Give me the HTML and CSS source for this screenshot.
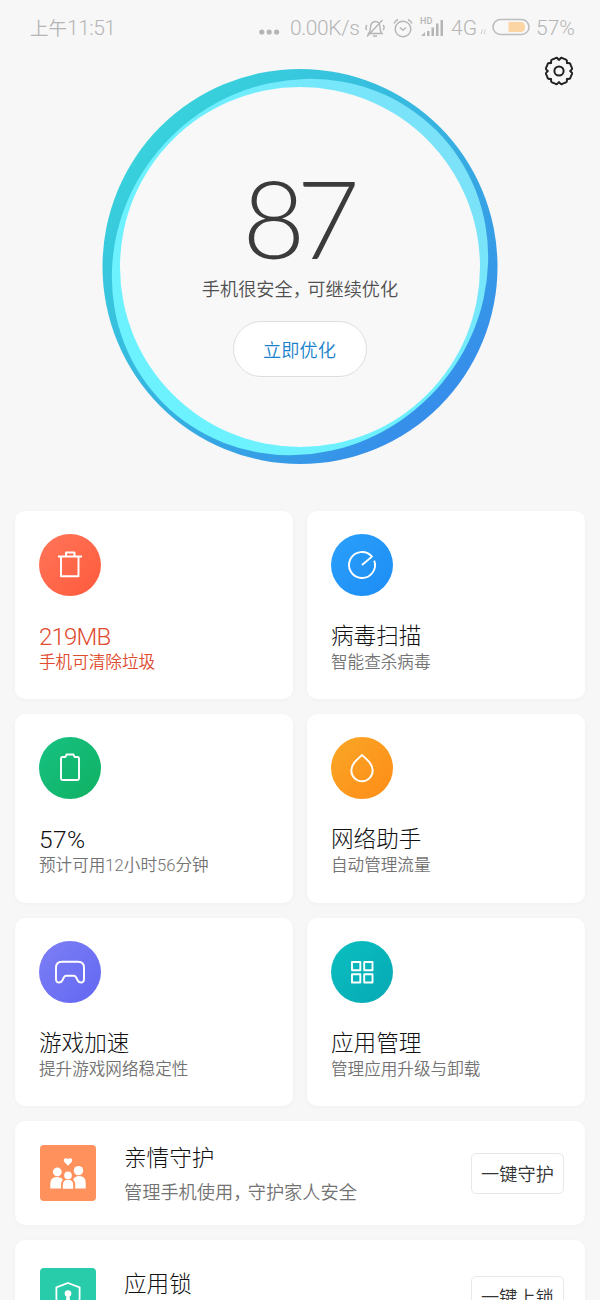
FILE: index.html
```html
<!DOCTYPE html>
<html lang="zh-CN">
<head>
<meta charset="utf-8">
<meta name="viewport" content="width=device-width">
<title>手机管家</title>
<link rel="stylesheet" href="styles.css">
</head>
<body>
<div class="screen">
  <header class="status">
    <span class="clock"><span class="cjk">上午</span>11:51</span>
    <div class="status-right">
      <svg class="dots" width="21" height="6" viewBox="0 0 21 6"><circle cx="2.8" cy="3" r="2.6"/><circle cx="10.2" cy="3" r="2.6"/><circle cx="17.6" cy="3" r="2.6"/></svg>
      <span class="speed">0.00K/s</span>
      <svg class="bell line" width="20" height="20" viewBox="0 0 20 20"><path d="M3.5 15.5c2-2 2-3 2-6C5.500 5.500 7 4 10 3.500s5 2 5 6 .5 4 2 6zM8 18h4M2 18.500L17.500 2M2 7c-1.200 1.200-1.200 3.500-.2 5M18 7c1.200 1.200 1.200 3.500.2 5"/></svg>
      <svg class="alarm line" width="20" height="20" viewBox="0 0 20 20"><circle cx="10" cy="11" r="7.800"/><path d="M1 5.500Q2 3 5 1.500M19 5.500Q18 3 15 1.500M6.800 9.500L10 12l3.200-2.500"/></svg>
      <div class="cell">
        <span class="hd">HD</span>
        <svg width="24" height="18" viewBox="0 0 24 18"><path d="M1 17l4-4v4zM7 12h2.500v5H7zM11.500 8.500H14V17h-2.500zM16 4.500h2.500V17H16zM20.500 1H23v16h-2.500z"/></svg>
      </div>
      <span class="net">4G</span>
      <svg class="arrows" width="7" height="7" viewBox="0 0 7 7"><path d="M1 6L2.500 1.500M4 6l1.500-4.500"/></svg>
      <svg class="battery" width="38" height="18" viewBox="0 0 38 18"><rect x="1" y="1.500" width="36" height="15" rx="7.500" fill="#f8f8f8" stroke="#bdbdbd" stroke-width="1.600"/><path d="M16.500 4h12q4.500 0 4.500 5t-4.500 5h-12z" fill="#fbd5a3"/></svg>
      <span class="pct">57%</span>
    </div>
  </header>

  <section class="hero">
    <svg class="gear" width="30" height="30" viewBox="-15 -15 30 30">
      <defs><path id="tooth" d="M-4.360-10.530Q-3.900-10.900-3.600-12Q-3.300-13.200-2-13.200Q0-12.800 2-13.200Q3.300-13.200 3.600-12Q3.900-10.900 4.360-10.530"/></defs>
      <use href="#tooth" transform="rotate(22.5)"/><use href="#tooth" transform="rotate(67.5)"/><use href="#tooth" transform="rotate(112.5)"/><use href="#tooth" transform="rotate(157.5)"/><use href="#tooth" transform="rotate(202.5)"/><use href="#tooth" transform="rotate(247.5)"/><use href="#tooth" transform="rotate(292.5)"/><use href="#tooth" transform="rotate(337.5)"/>
      <circle r="4.600"/>
    </svg>
    <svg class="ring" width="396" height="396" viewBox="-198 -198 396 396">
      <defs>
        <linearGradient id="deep" x1="0.15" y1="0.15" x2="0.85" y2="0.85"><stop offset="0" stop-color="#38d1dc"/><stop offset=".5" stop-color="#36b2e0"/><stop offset="1" stop-color="#368eea"/></linearGradient>
        <linearGradient id="pale" gradientUnits="userSpaceOnUse" x1="-180" y1="0" x2="190" y2="60"><stop offset="0" stop-color="#6cf2fe"/><stop offset=".6" stop-color="#6feefd"/><stop offset="1" stop-color="#7ce1f8"/></linearGradient>
      </defs>
      <circle cy="-.500" r="197.500" fill="url(#deep)"/>
      <g fill="url(#pale)"><ellipse rx="193" ry="183.200" transform="rotate(-45)"/></g>
      <circle r="180" fill="#f8f8f8"/>
    </svg>
    <div class="score-box">
      <div class="score">87</div>
      <div class="verdict">手机很安全<span class="comma">，</span>可继续优化</div>
      <button class="optimize">立即优化</button>
    </div>
  </section>

  <main class="content">
    <div class="grid">
      <article class="card alert">
        <div class="badge red"><svg viewBox="0 0 62 62"><path d="M19 22.500h24M27 22v-3.500h8.500V22M22 23v19.200h17.500V23"/></svg></div>
        <h2 class="size">219MB</h2><p>手机可清除垃圾</p>
      </article>
      <article class="card">
        <div class="badge blue"><svg viewBox="0 0 62 62"><path d="M31 31l9.960-8.360A13 13 0 1 0 43.220 26.550"/></svg></div>
        <h2>病毒扫描</h2><p>智能查杀病毒</p>
      </article>
      <article class="card">
        <div class="badge green"><svg viewBox="0 0 62 62"><path d="M23.500 20h3l1-2.500h7l1 2.500h3q1.500 0 1.500 1.500v20q0 1.500-1.500 1.500h-15q-1.500 0-1.500-1.500v-20q0-1.500 1.500-1.500z"/></svg></div>
        <h2 class="charge">57%</h2><p>预计可用12小时56分钟</p>
      </article>
      <article class="card">
        <div class="badge orange"><svg viewBox="0 0 62 62"><path d="M31 18C26 22.500 20.300 27 20.300 33.500A10.700 10.700 0 0 0 41.700 33.500C41.700 27 36 22.500 31 18z"/></svg></div>
        <h2>网络助手</h2><p>自动管理流量</p>
      </article>
      <article class="card">
        <div class="badge purple"><svg viewBox="0 0 62 62"><path d="M23 20.700h16q6 0 6 6v11q0 3.800-3 3.800-2.300 0-3.300-2l-1.500-3q-1-1.800-2.500-1.800h-7.400q-1.500 0-2.500 1.800l-1.500 3q-1 2-3.300 2-3 0-3-3.800v-11q0-6 6-6z"/></svg></div>
        <h2>游戏加速</h2><p>提升游戏网络稳定性</p>
      </article>
      <article class="card">
        <div class="badge teal"><svg viewBox="0 0 62 62"><path d="M21 21h8.300v8.300H21zM33.200 21h8.300v8.300h-8.300zM21 33.200h8.300v8.300H21zM33.200 33.200h8.300v8.300h-8.300z"/></svg></div>
        <h2>应用管理</h2><p>管理应用升级与卸载</p>
      </article>
    </div>

    <article class="row">
      <svg class="tile" width="56" height="56" viewBox="0 0 56 56"><rect width="56" height="56" rx="4" fill="#ff915c"/><g fill="#fff"><path d="M28 20.800l-3.400-3.500c-2-3 .4-5 2.400-3.600h2c2-1.400 4.400.6 2.400 3.600z"/><circle cx="17.300" cy="26.800" r="4.400"/><circle cx="38.500" cy="25.600" r="4.700"/><circle cx="28" cy="30.400" r="3.800"/><path d="M10.300 43.600V39q0-7 6.500-7 4.500 0 6 2.800-1.800 2-1.800 4.800v4zM45.700 43.600V38q0-7-6.500-7-4.500 0-6 3.500 2 2 2 5.100v4zM22.800 43.800v-3.600q0-5.400 5.200-5.400t5.200 5.400v3.600z"/></g></svg>
      <div class="row-text"><h2>亲情守护</h2><p>管理手机使用<span class="comma">，</span>守护家人安全</p></div>
      <button class="action">一键守护</button>
    </article>
    <article class="row tall">
      <svg class="tile" width="56" height="56" viewBox="0 0 56 56"><rect width="56" height="56" rx="4" fill="#29ccaa"/><path d="M28 15l11.600 4.300V30q0 8-11.600 12.500Q16.400 38 16.400 30V19.300z" fill="none" stroke="#fff" stroke-width="1.800"/><circle cx="28" cy="25.600" r="3.300" fill="#fff"/><path d="M26.700 26h2.600l1 9h-4.600z" fill="#fff"/></svg>
      <div class="row-text"><h2>应用锁</h2></div>
      <button class="action">一键上锁</button>
    </article>
  </main>
</div>
</body>
</html>
```

FILE: styles.css
```css
* { box-sizing: border-box; }
body { margin: 0; background: #f7f7f7; }
h2, p { margin: 0; font-weight: 350; white-space: nowrap; }
button { font: inherit; padding: 0; }

.screen {
  width: 600px;
  height: 1300px;
  overflow: hidden;
  background: #f7f7f7;
  font-family: Roboto, "Noto Sans CJK SC", sans-serif;
  font-weight: 350;
  color: #111;
}

/* status bar */
.status {
  display: flex;
  justify-content: space-between;
  align-items: center;
  height: 56px;
  padding: 0 24px 0 30px;
  color: #b5b5b5;
  font-size: 21px;
  line-height: 24px;
}
.clock { letter-spacing: -0.5px; }
.cjk { font-size: 18.5px; letter-spacing: 0; }
.status-right { display: flex; align-items: center; }
.dots { fill: #b5b5b5; margin: 8px 10px 0 0; }
.speed { width: 75px; white-space: nowrap; letter-spacing: -0.4px; }
.line { fill: none; stroke: #b5b5b5; stroke-width: 1.4; }
.bell { margin-right: 8px; }
.alarm { margin-right: 7px; }
.cell { position: relative; width: 24px; height: 18px; margin-right: 7px; fill: #b5b5b5; }
.cell svg { display: block; }
.hd { position: absolute; left: 0; top: -2px; font-size: 9px; line-height: 9px; font-weight: 500; }
.net { width: 29px; }
.arrows { fill: none; stroke: #ccc; margin: 6px 5px 0 0; }
.battery { margin: 0 6px 2px 0; }
.pct { width: 40px; white-space: nowrap; }

/* score ring */
.hero { position: relative; height: 455px; padding-top: 13px; }
.gear { position: absolute; left: 544px; top: 0; fill: none; stroke: #222; stroke-width: 2; stroke-linecap: round; stroke-linejoin: round; }
.ring { display: block; margin: 0 auto; }
.score-box {
  position: absolute;
  inset: 101px 0 auto;
  display: flex;
  flex-direction: column;
  align-items: center;
}
.score { font-family: Lato, sans-serif; font-weight: 300; font-size: 109px; line-height: 120px; letter-spacing: -9px; padding-right: 7px; color: #3b3b3b; }
.verdict { font-size: 18.2px; line-height: 26px; color: #505050; }
.comma { letter-spacing: -3.6px; }
.optimize {
  width: 134px;
  height: 56px;
  margin: 18px 1px 0 0;
  padding-bottom: 1px;
  border: 1px solid #ddd;
  border-radius: 28px;
  background: #fff;
  color: #1a82cd;
  font-size: 18.2px;
}

/* feature cards */
.content { display: flex; flex-direction: column; gap: 15px; padding: 0 15px; }
.grid { display: grid; grid-template-columns: 278px 278px; gap: 15px 14px; }
.card, .row { background: #fff; border-radius: 10px; box-shadow: 0 1px 5px rgba(0, 0, 0, .03); }
.card { height: 188.3px; padding: 23px 24px; }
.badge { width: 62px; height: 62px; border-radius: 50%; }
.badge svg { display: block; fill: none; stroke: #fff; stroke-width: 1.9; stroke-linejoin: round; }
.red { background: linear-gradient(135deg, #ff7559, #ff5a3c); }
.blue { background: linear-gradient(135deg, #2aa0fb, #1d8cf4); }
.green { background: linear-gradient(135deg, #17c283, #10b062); }
.orange { background: linear-gradient(135deg, #f9a726, #ff8c17); }
.purple { background: linear-gradient(135deg, #7c7ff4, #6367f2); }
.teal { background: linear-gradient(135deg, #0bc0c0, #05a8b4); }
h2 { font-size: 22.6px; line-height: 28px; font-weight: 300; }
.card h2 { margin-top: 27px; }
.card h2.size { font-size: 24px; letter-spacing: -0.8px; }
.card h2.charge { font-size: 24.5px; letter-spacing: 0.4px; }
.card p { font-size: 16.6px; line-height: 24px; color: #737373; }
.card.alert h2, .card.alert p { color: #e04a2d; }

/* service rows */
.row { display: flex; align-items: center; height: 104.5px; padding: 0 21px 0 25px; }
.row.tall { height: 112px; }
.row-text { flex: 1; margin-left: 28px; padding-top: 4px; }
.tall .row-text { padding: 0 0 22px; }
.row-text p { margin-top: 7px; font-size: 18.2px; line-height: 26px; color: #737373; }
.action {
  width: 93px;
  height: 41px;
  padding-bottom: 1px;
  border: 1px solid #e8e8e8;
  border-radius: 5px;
  background: #fff;
  color: #333;
  font-size: 18.2px;
}
```
